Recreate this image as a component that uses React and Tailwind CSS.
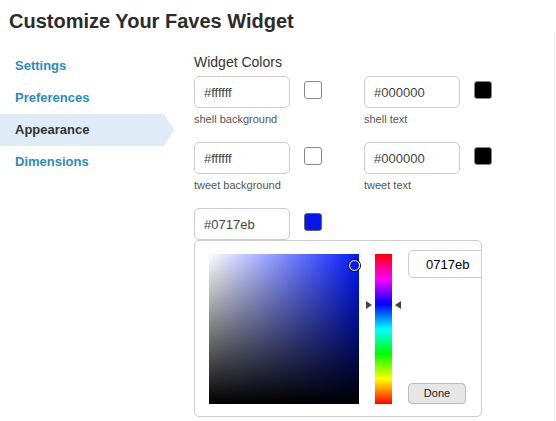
import { useState } from 'react';

const NAV = ['Settings', 'Preferences', 'Appearance', 'Dimensions'];

const FIELDS = [
  { value: '#ffffff', label: 'shell background', swatch: 'bg-white' },
  { value: '#000000', label: 'shell text', swatch: 'bg-black' },
  { value: '#ffffff', label: 'tweet background', swatch: 'bg-white' },
  { value: '#000000', label: 'tweet text', swatch: 'bg-black' },
];

// one colour field: text input + swatch + caption
const ColorField = ({ value, label, swatch }) => (
  <div>
    <div className="flex items-start">
      <input
        readOnly
        value={value}
        className="w-[96px] h-[32px] border border-[#ccc] rounded-[5px] pl-[9px] text-[13px] text-[#444] outline-none"
      />
      <div className={`ml-[14px] mt-[5px] w-[18px] h-[18px] rounded-[3px] border border-[#888] ${swatch}`} />
    </div>
    <div className="mt-[4px] text-[11px] leading-[14px] text-[#555]">{label}</div>
  </div>
);

export default function App() {
  const [active, setActive] = useState('Appearance');
  const [hex, setHex] = useState('0717eb');

  return (
    <div className="w-[556px] h-[421px] overflow-hidden bg-white font-['Liberation_Sans',Arial,sans-serif] text-[#333]">
      <h1 className="pl-[9px] pt-[10px] text-[20px] leading-[22px] font-bold text-[#2b2b2b]">
        Customize Your Faves Widget
      </h1>

      <div className="flex w-[555px] h-[389px] border-r border-[#f0f0f0]">
        {/* sidebar */}
        <div className="w-[194px] shrink-0 pt-[18px]">
          {NAV.map((item) => (
            <button
              key={item}
              onClick={() => setActive(item)}
              className={`block h-[32px] pl-[15px] text-left text-[13px] font-bold ${
                active === item
                  ? 'w-[174px] bg-[#ddecf6] text-[#333] [clip-path:polygon(0_0,164px_0,174px_50%,164px_100%,0_100%)]'
                  : 'w-[160px] text-[#2a8bc4]'
              }`}
            >
              {item}
            </button>
          ))}
        </div>

        {/* main */}
        <div className="pt-[21px]">
          <div className="text-[14px] leading-[18px] text-[#333]">Widget Colors</div>

          <div className="mt-[5px] grid grid-cols-[170px_170px] gap-y-[16px]">
            {FIELDS.map((f, i) => (
              <ColorField key={i} {...f} />
            ))}
          </div>

          <div className="mt-[16px] flex items-start">
            <input
              readOnly
              value={'#' + hex}
              className="w-[96px] h-[32px] border border-[#ccc] rounded-[5px] pl-[9px] text-[13px] text-[#444] outline-none"
            />
            <div className="ml-[14px] mt-[5px] w-[18px] h-[18px] rounded-[3px] border border-[#666] bg-[#0717eb]" />
          </div>

          {/* picker */}
          <div className="w-[288px] h-[177px] border border-[#ccc] rounded-[5px] overflow-hidden flex pl-[14px] pt-[13px]">
            <div className="relative shrink-0 w-[150px] h-[150px] bg-[linear-gradient(to_top,#000,transparent),linear-gradient(to_right,#fff,#0018ff)]">
              <div className="absolute left-[140px] top-[6px] w-[11px] h-[11px] rounded-full border-[1.5px] border-white ring-1 ring-black" />
            </div>

            <div className="relative shrink-0 ml-[16px] w-[17px] h-[150px] bg-[linear-gradient(to_bottom,#f00,#f0f,#00f,#0ff,#0f0,#ff0,#f00)]">
              <div className="absolute left-[-9px] top-[47px] w-0 h-0 border-y-[4.5px] border-y-transparent border-l-[6px] border-l-[#444]" />
              <div className="absolute left-[20px] top-[47px] w-0 h-0 border-y-[4.5px] border-y-transparent border-r-[6px] border-r-[#444]" />
            </div>

            <div className="shrink-0 ml-[16px] -mt-[4px] h-[154px] flex flex-col justify-between">
              <input
                value={hex}
                onChange={(e) => setHex(e.target.value)}
                className="w-[96px] h-[28px] border border-[#ccc] rounded-[5px] pl-[17px] text-[13px] text-black outline-none"
              />
              <button className="w-[58px] h-[21px] bg-[#e6e6e6] border border-[#bbb] rounded-[4px] text-[11px] text-[#222]">
                Done
              </button>
            </div>
          </div>
        </div>
      </div>
    </div>
  );
}
